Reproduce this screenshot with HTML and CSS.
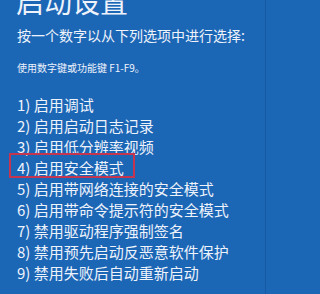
FILE: index.html
```html
<!DOCTYPE html>
<html lang="zh-CN">
<head>
<meta charset="utf-8">
<title>启动设置</title>
<link rel="stylesheet" href="styles.css">
</head>
<body>
<main class="screen">
  <h1 class="title">启动设置</h1>
  <p class="prompt">按一个数字以从下列选项中进行选择:</p>
  <p class="hint">使用数字键或功能键 F1-F9。</p>
  <ol class="options">
    <li class="option">1) 启用调试</li>
    <li class="option">2) 启用启动日志记录</li>
    <li class="option">3) 启用低分辨率视频</li>
    <li class="option"><span class="selected">4) 启用安全模式</span></li>
    <li class="option">5) 启用带网络连接的安全模式</li>
    <li class="option">6) 启用带命令提示符的安全模式</li>
    <li class="option">7) 禁用驱动程序强制签名</li>
    <li class="option">8) 禁用预先启动反恶意软件保护</li>
    <li class="option">9) 禁用失败后自动重新启动</li>
  </ol>
</main>
</body>
</html>
```
FILE: styles.css
```css
html, body {
  margin: 0;
  padding: 0;
  background: #1c66b6;
  overflow: hidden;
}

.screen {
  width: 266px;
  height: 294px;
  box-sizing: border-box;
  padding-left: 17px;
  background: #1c66b6;
  border-right: 1px solid #1759a3;
  color: #eef3fb;
  font-family: "Noto Sans CJK SC", "Noto Sans", sans-serif;
  overflow: hidden;
}

.title {
  margin: -16px 0 0 -1px;
  font-size: 28px;
  line-height: 34px;
  font-weight: 400;
  letter-spacing: 0;
}

.prompt {
  margin: 7px 0 0 0;
  font-size: 14px;
  line-height: 20px;
  font-weight: 400;
  white-space: nowrap;
}

.hint {
  margin: 16px 0 0 0;
  font-size: 10px;
  line-height: 14px;
  white-space: nowrap;
}

.options {
  list-style: none;
  margin: 19px 0 0 0;
  padding: 0;
}

.option {
  font-size: 15px;
  line-height: 21px;
  white-space: nowrap;
}

.selected {
  position: relative;
  display: inline-block;
}

.selected::after {
  content: "";
  position: absolute;
  left: -8px;
  right: -11px;
  top: -4px;
  bottom: 0;
  border: 2px solid #c4364f;
}
```
